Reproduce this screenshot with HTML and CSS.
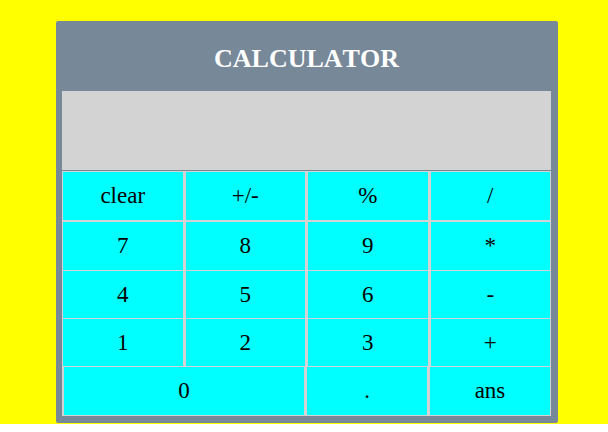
FILE: index.html
```
<!DOCTYPE html>
<html lang="en">
<head>
<meta charset="utf-8">
<title>Calculator</title>
<link rel="stylesheet" href="styles.css">
</head>
<body>
<main class="page">
  <section class="calculator">
    <h1 class="title">CALCULATOR</h1>
    <input class="display" type="text" aria-label="Result" readonly>
    <div class="keys">
      <div class="row row-functions">
        <button class="key" type="button">clear</button>
        <button class="key" type="button">+/-</button>
        <button class="key" type="button">%</button>
        <button class="key" type="button">/</button>
      </div>
      <div class="row">
        <button class="key" type="button">7</button>
        <button class="key" type="button">8</button>
        <button class="key" type="button">9</button>
        <button class="key" type="button">*</button>
      </div>
      <div class="row row-short">
        <button class="key" type="button">4</button>
        <button class="key" type="button">5</button>
        <button class="key" type="button">6</button>
        <button class="key" type="button">-</button>
      </div>
      <div class="row row-short">
        <button class="key" type="button">1</button>
        <button class="key" type="button">2</button>
        <button class="key" type="button">3</button>
        <button class="key" type="button">+</button>
      </div>
      <div class="row row-last">
        <button class="key" type="button">0</button>
        <button class="key" type="button">.</button>
        <button class="key" type="button">ans</button>
      </div>
    </div>
  </section>
</main>
</body>
</html>
```
FILE: styles.css
```
* {
  box-sizing: border-box;
}

body {
  margin: 0;
  background: white;
  font-family: "Liberation Serif", "Times New Roman", serif;
}

.page {
  padding: 21px 50px 1px 56px;
  background: yellow;
}

.calculator {
  padding: 0 7px 7px 6px;
  border-radius: 2px;
  background: lightslategray;
}

.title {
  margin: 0;
  padding: 23px 0 17px;
  color: white;
  font-size: 26px;
  font-kerning: none;
  line-height: 30px;
  text-align: center;
}

.display {
  display: block;
  width: 100%;
  height: 79px;
  margin: 0 0 1px;
  padding: 0 12px;
  border: 0;
  border-radius: 0;
  outline: 0;
  background: lightgray;
  font: inherit;
  font-size: 23px;
  text-align: right;
}

.keys {
  display: flex;
  flex-direction: column;
  gap: 1px;
  padding: 1px;
  background: lightgray;
}

.row {
  display: grid;
  grid-template-columns: repeat(4, 1fr);
  gap: 3px;
  height: 48px;
}

.row-functions {
  margin-bottom: 1px;
}

.row-short {
  height: 47px;
}

.row-last {
  grid-template-columns: 2fr 1fr 1fr;
  padding-left: 1px;
}

.key {
  margin: 0;
  padding: 0;
  border: 0;
  border-radius: 0;
  background: aqua;
  color: black;
  font: inherit;
  font-size: 23px;
  line-height: 28px;
}
```
